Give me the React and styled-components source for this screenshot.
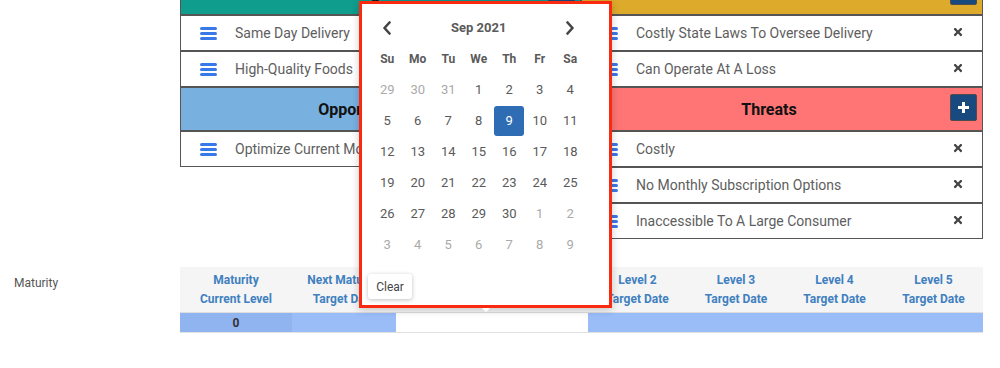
import React from 'react'
import styled, { createGlobalStyle } from 'styled-components'
import { FaTimes } from 'react-icons/fa'

const GlobalStyle = createGlobalStyle`
  body {
    margin: 0;
    background: #fff;
    font-family: Roboto, "Liberation Sans", sans-serif;
  }
  * { box-sizing: border-box; }
`

const swot = [
  { title: 'Strengths', color: '#0f9d8e', items: ['Same Day Delivery', 'High-Quality Foods'] },
  { title: 'Weaknesses', color: '#ddaa2b', items: ['Costly State Laws To Oversee Delivery', 'Can Operate At A Loss'] },
  { title: 'Opportunities', color: '#78b0e0', items: ['Optimize Current Model'] },
  { title: 'Threats', color: '#ff7575', items: ['Costly', 'No Monthly Subscription Options', 'Inaccessible To A Large Consumer'] },
]

const columns = [
  { top: 'Maturity', bottom: 'Current Level', w: 112, value: '0', bg: '#8fb4f0' },
  { top: 'Next Maturity', bottom: 'Target Date', w: 104, bg: '#9abcf7' },
  { top: 'Level 0', bottom: 'Target Date', w: 96, bg: '#fff' },
  { top: 'Level 1', bottom: 'Target Date', w: 96, bg: '#fff' },
  { top: 'Level 2', bottom: 'Target Date', w: 99, bg: '#9abcf7' },
  { top: 'Level 3', bottom: 'Target Date', w: 98, bg: '#9abcf7' },
  { top: 'Level 4', bottom: 'Target Date', w: 99, bg: '#9abcf7' },
  { top: 'Level 5', bottom: 'Target Date', w: 99, bg: '#9abcf7' },
]

// [day, otherMonth, selected]
const weeks = [
  [[29, 1], [30, 1], [31, 1], [1], [2], [3], [4]],
  [[5], [6], [7], [8], [9, 0, 1], [10], [11]],
  [[12], [13], [14], [15], [16], [17], [18]],
  [[19], [20], [21], [22], [23], [24], [25]],
  [[26], [27], [28], [29], [30], [1, 1], [2, 1]],
  [[3, 1], [4, 1], [5, 1], [6, 1], [7, 1], [8, 1], [9, 1]],
]

function Bars() {
  return (
    <svg width="17" height="13" viewBox="0 0 17 13">
      <rect x="0" y="0" width="17" height="3" rx="1.5" fill="#3b78e7" />
      <rect x="0" y="5" width="17" height="3" rx="1.5" fill="#3b78e7" />
      <rect x="0" y="10" width="17" height="3" rx="1.5" fill="#3b78e7" />
    </svg>
  )
}

function Chevron({ left }) {
  return (
    <svg width="10" height="14" viewBox="0 0 10 14">
      <path
        d={left ? 'M7.5 1.5 L2.5 7 L7.5 12.5' : 'M2.5 1.5 L7.5 7 L2.5 12.5'}
        fill="none"
        stroke="#444"
        strokeWidth="2.6"
        strokeLinecap="round"
        strokeLinejoin="round"
      />
    </svg>
  )
}

function App() {
  return (
    <Viewport>
      <GlobalStyle />
      <Content>
        <FormRow>
          <Label />
          <SwotGrid>
            {swot.map((q) => (
              <Quadrant key={q.title}>
                <QuadHeader $bg={q.color}>
                  <QuadTitle>{q.title}</QuadTitle>
                  <AddButton>
                    <svg width="13" height="13" viewBox="0 0 13 13">
                      <path d="M6.5 1 V12 M1 6.5 H12" stroke="#fff" strokeWidth="3" />
                    </svg>
                  </AddButton>
                </QuadHeader>
                {q.items.map((it) => (
                  <Item key={it}>
                    <Handle><Bars /></Handle>
                    <ItemText>{it}</ItemText>
                    <Remove><FaTimes size={12} /></Remove>
                  </Item>
                ))}
              </Quadrant>
            ))}
          </SwotGrid>
        </FormRow>

        <FormRow $gap={28}>
          <Label>Maturity</Label>
          <Table>
            <HeadRow>
              {columns.map((c) => (
                <HeadCell key={c.top} style={{ width: c.w }}>
                  {c.top}
                  <br />
                  {c.bottom}
                </HeadCell>
              ))}
            </HeadRow>
            <DataRow>
              {columns.map((c) => (
                <DataCell key={c.top} $bg={c.bg} style={{ width: c.w }}>
                  {c.value}
                </DataCell>
              ))}
            </DataRow>
          </Table>
        </FormRow>
      </Content>

      <Picker>
        <PickerGrid>
          <NavCell><Chevron left /></NavCell>
          <MonthTitle>Sep 2021</MonthTitle>
          <NavCell><Chevron /></NavCell>
          {['Su', 'Mo', 'Tu', 'We', 'Th', 'Fr', 'Sa'].map((d) => (
            <DayName key={d}>{d}</DayName>
          ))}
          {weeks.flat().map(([n, muted, active], i) => (
            <DayCell key={i}>
              <Day $muted={muted} $active={active}>{n}</Day>
            </DayCell>
          ))}
        </PickerGrid>
        <ClearButton>Clear</ClearButton>
      </Picker>
    </Viewport>
  )
}

const Viewport = styled.div`
  position: relative;
  width: 1000px;
  height: 368px;
  overflow: hidden;
`

const Content = styled.div`
  margin-top: -29px;
  display: flex;
  flex-direction: column;
`

const FormRow = styled.div`
  display: grid;
  grid-template-columns: 180px 803px;
  margin-top: ${(p) => p.$gap || 0}px;
`

const Label = styled.div`
  padding: 9px 0 0 14px;
  font-size: 12px;
  color: #555;
`

const SwotGrid = styled.div`
  display: grid;
  grid-template-columns: 401px 402px;
  align-items: start;
`

const Quadrant = styled.div`
  display: flex;
  flex-direction: column;
`

const QuadHeader = styled.div`
  height: 44px;
  display: flex;
  align-items: center;
  padding: 0 5px 0 6px;
  background: ${(p) => p.$bg};
  border: 1px solid #555;
`

const QuadTitle = styled.div`
  flex: 1;
  text-align: center;
  font-size: 16px;
  font-weight: 700;
  color: #111;
`

const AddButton = styled.div`
  width: 27px;
  height: 27px;
  margin-top: -3px;
  display: flex;
  align-items: center;
  justify-content: center;
  background: #184a7f;
  border: 1.5px solid #4d4d4d;
  border-radius: 2px;
`

const Item = styled.div`
  height: 36px;
  display: flex;
  align-items: center;
  border: 1px solid #555;
  background: #fff;
`

const Handle = styled.div`
  width: 54px;
  padding-left: 19px;
  display: flex;
  align-items: center;
  padding-top: 1px;
`

const ItemText = styled.div`
  flex: 1;
  font-size: 14px;
  color: #5e5e5e;
`

const Remove = styled.div`
  width: 51px;
  display: flex;
  justify-content: center;
  margin-top: -3px;
  padding-left: 2px;
  color: #444;
`

const Table = styled.div`
  display: flex;
  flex-direction: column;
`

const HeadRow = styled.div`
  display: flex;
  height: 46px;
  background: #f5f5f5;
  border-bottom: 1px solid #ddd;
`

const HeadCell = styled.div`
  display: flex;
  align-items: center;
  justify-content: center;
  text-align: center;
  font-size: 12px;
  line-height: 19px;
  font-weight: 700;
  color: #4080c0;
`

const DataRow = styled.div`
  display: flex;
  height: 20px;
  border-bottom: 1px solid #e2e2e2;
`

const DataCell = styled.div`
  display: flex;
  align-items: center;
  justify-content: center;
  background: ${(p) => p.$bg};
  font-size: 12px;
  font-weight: 700;
  color: #333;
`

const Picker = styled.div`
  position: absolute;
  left: 359px;
  top: 1px;
  width: 253px;
  height: 307px;
  padding: 8px 6px 6px;
  background: #fff;
  border: 3px solid #fa2a10;
  box-shadow: 0 2px 8px rgba(0, 0, 0, 0.2);
  display: flex;
  flex-direction: column;
  &::after {
    content: '';
    position: absolute;
    top: 100%;
    left: 120px;
    margin-top: 3px;
    border-left: 4px solid transparent;
    border-right: 4px solid transparent;
    border-top: 4px solid #fff;
  }
`

const PickerGrid = styled.div`
  display: grid;
  grid-template-columns: repeat(7, 30.5px);
  grid-auto-rows: 31px;
  margin-left: 4px;
  color: #555;
`

const NavCell = styled.div`
  display: flex;
  align-items: center;
  justify-content: center;
`

const MonthTitle = styled.div`
  grid-column: span 5;
  display: flex;
  align-items: center;
  justify-content: center;
  font-size: 13px;
  font-weight: 700;
  color: #5a5a5a;
`

const DayName = styled.div`
  display: flex;
  align-items: center;
  justify-content: center;
  font-size: 12px;
  font-weight: 700;
  color: #5a5a5a;
`

const DayCell = styled.div`
  display: flex;
  align-items: center;
  justify-content: center;
`

const Day = styled.div`
  width: 30px;
  height: 30px;
  display: flex;
  align-items: center;
  justify-content: center;
  border-radius: 3px;
  font-size: 13px;
  color: ${(p) => (p.$active ? '#fff' : p.$muted ? '#aaa' : '#5a5a5a')};
  background: ${(p) => (p.$active ? '#2e6db4' : 'transparent')};
`

const ClearButton = styled.div`
  margin-top: 14px;
  width: 44px;
  height: 25px;
  display: flex;
  align-items: center;
  justify-content: center;
  font-size: 12px;
  color: #444;
  background: #fff;
  border-radius: 3px;
  box-shadow: 0 1px 4px rgba(0, 0, 0, 0.25);
`

export default App
